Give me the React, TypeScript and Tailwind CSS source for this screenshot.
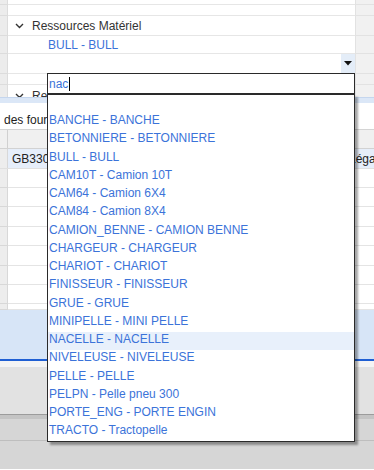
import React from "react";

const ITEMS = [
  "",
  "BANCHE - BANCHE",
  "BETONNIERE - BETONNIERE",
  "BULL - BULL",
  "CAM10T - Camion 10T",
  "CAM64 - Camion 6X4",
  "CAM84 - Camion 8X4",
  "CAMION_BENNE - CAMION BENNE",
  "CHARGEUR - CHARGEUR",
  "CHARIOT - CHARIOT",
  "FINISSEUR - FINISSEUR",
  "GRUE - GRUE",
  "MINIPELLE - MINI PELLE",
  "NACELLE - NACELLE",
  "NIVELEUSE - NIVELEUSE",
  "PELLE - PELLE",
  "PELPN - Pelle pneu 300",
  "PORTE_ENG - PORTE ENGIN",
  "TRACTO - Tractopelle",
];

function Chevron() {
  return (
    <svg width="9" height="6" viewBox="0 0 9 6" className="shrink-0">
      <polyline points="1,1 4.5,4.5 8,1" fill="none" stroke="#333" strokeWidth="1.4" />
    </svg>
  );
}

// one line of the tree: grey gutter, content, grey right column
function TreeRow({ h, children }: { h: string; children?: React.ReactNode }) {
  return (
    <div className={`flex ${h} shrink-0`}>
      <div className="w-[8px] shrink-0 bg-[#ececec] border-r border-b border-[#dcdcdc]" />
      <div className="flex-1 flex items-center border-b border-[#e6e6e6] overflow-hidden">{children}</div>
      <div className="w-[19px] shrink-0 bg-[#f1f1f1] border-b border-l border-[#e2e2e2]" />
    </div>
  );
}

function GridRow({ h = "h-[19px]" }: { h?: string }) {
  return (
    <div className={`flex ${h} shrink-0`}>
      <div className="w-[8px] shrink-0 bg-[#ededed] border-r border-b border-[#d8d8d8]" />
      <div className="flex-1 border-b border-[#e4e4e4]" />
    </div>
  );
}

export default function App() {
  return (
    <div className="relative w-[374px] h-[470px] overflow-hidden bg-white font-['Liberation_Sans',Arial,sans-serif] text-[12px] leading-[14px]">
      {/* ─── Tree (behind popup) ───────────────────────────── */}
      <div className="flex flex-col h-[97px] overflow-hidden">
        <TreeRow h="h-[5px]" />
        <TreeRow h="h-[11px]" />
        <TreeRow h="h-[20px]">
          <div className="flex items-center gap-[8px] pl-[7px]">
            <Chevron />
            <span className="text-[#333]">Ressources Matériel</span>
          </div>
        </TreeRow>
        <TreeRow h="h-[18px]">
          <span className="pl-[40px] text-[#3b73d9]">BULL - BULL</span>
        </TreeRow>
        <TreeRow h="h-[20px]">
          <div className="flex-1" />
          <div className="w-[14px] h-full bg-[#e4edf8] flex items-center justify-center">
            <svg width="8" height="5" viewBox="0 0 8 5">
              <polygon points="0,0 8,0 4,4.5" fill="#111" />
            </svg>
          </div>
        </TreeRow>
        <TreeRow h="h-[11px]" />
        <TreeRow h="h-[20px]">
          <div className="flex items-center gap-[8px] pl-[7px] pt-[2px]">
            <Chevron />
            <span className="text-[#333]">Ressources Humaines</span>
          </div>
        </TreeRow>
      </div>

      {/* ─── Lower panel ───────────────────────────────────── */}
      <div className="flex flex-col">
        <div className="h-[6px] bg-[#dbe7f7] border-t border-[#c5d6ee]" />
        <div className="h-[27px] pt-[10px] pl-[4px] text-[#222] border-b border-[#d4d4d4]">des fournisseurs</div>
        <div className="flex h-[19px] bg-[#f0f0f0] border-b border-[#d2d2d2]">
          <div className="w-[8px] border-r border-[#d0d0d0]" />
          <div className="flex-1" />
        </div>
        <div className="flex h-[20px] border-b border-[#e0e0e0]">
          <div className="w-[8px] shrink-0 bg-[#ededed] border-r border-[#d8d8d8]" />
          <div className="flex-1 flex items-center bg-[#e6eefa] text-[#222] overflow-hidden">
            <span className="w-[341px] shrink-0 pl-[4px]">GB3301</span>
            <span className="whitespace-nowrap">Légale</span>
          </div>
        </div>
        <GridRow />
        <GridRow />
        <GridRow h="h-[20px]" />
        <GridRow />
        <GridRow h="h-[20px]" />
        <GridRow />
        <GridRow />
        <GridRow h="h-[6px]" />
        <div className="h-[49px] bg-[#d7e5f7]" />
        <div className="h-[2px] bg-[#1f5fd3]" />
        <div className="h-[6px] bg-[#f4f4f4]" />
        <div className="h-[47px] bg-[#e2e2e2]" />
        <div className="h-[5px] bg-[#c4c4c4] border-t border-[#9c9c9c]" />
        <div className="h-[22px] bg-[#d6d6d6] border-b border-[#bebebe]" />
        <div className="h-[28px] bg-[#d6d6d6]" />
      </div>

      {/* ─── Combo popup (overlay) ─────────────────────────── */}
      <div className="absolute left-[47px] top-[73px] w-[308px] flex flex-col">
        <div className="h-[21px] flex items-center pl-[1px] bg-white border border-[#2a2a2a]">
          <span className="text-[#3b73d9]">nac</span>
          <span className="w-px h-[14px] bg-black ml-[1px]" />
        </div>
        <div className="flex flex-col bg-white border border-[#2a2a2a] shadow-[3px_3px_2px_rgba(0,0,0,0.35)]">
          {ITEMS.map((it, i) => (
            <div
              key={i}
              className={`h-[18.24px] pl-[1px] leading-[15px] whitespace-nowrap text-[#3b73d9] ${
                it.startsWith("NACELLE") ? "bg-[#e8f0fb]" : ""
              }`}
            >
              {it}
            </div>
          ))}
        </div>
      </div>
    </div>
  );
}
